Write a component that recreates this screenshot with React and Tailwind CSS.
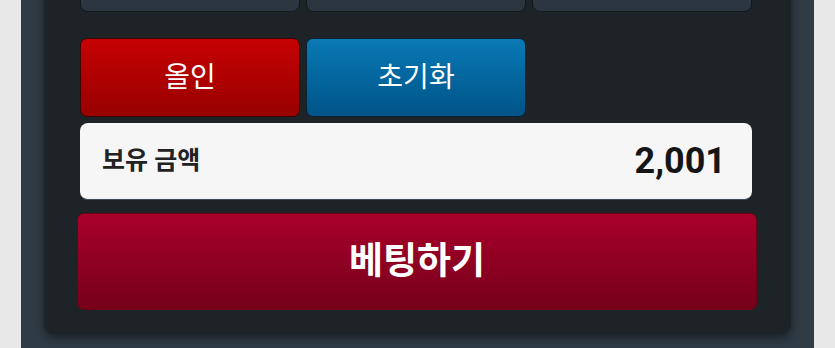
import React from 'react';

const FONT = { fontFamily: 'Roboto, "Noto Sans CJK KR", sans-serif' };

const App = () => {
    return (
        <div className="h-[348px] w-[835px] overflow-hidden bg-[#e8e8e8]" style={FONT}>
            <div className="ml-[21px] h-[400px] w-[793px] bg-[#2f3b45] px-[23px]">
                <div className="w-[747px] rounded-b-[10px] bg-[#1e2327] pb-[24px] pl-[36px] shadow-[0_4px_10px_rgba(0,0,0,0.45)]">
                    <div className="w-[672px]">
                        {/* previous row, mostly scrolled off the top */}
                        <div className="-mt-[48px] grid grid-cols-3 gap-[6px]">
                            <div className="h-[60px] rounded-[8px] border border-[#14181b] bg-[#2c3640]" />
                            <div className="h-[60px] rounded-[8px] border border-[#14181b] bg-[#2c3640]" />
                            <div className="h-[60px] rounded-[8px] border border-[#14181b] bg-[#2c3640]" />
                        </div>

                        <div className="mt-[26px] grid grid-cols-3 gap-[6px]">
                            <button className="flex h-[79px] items-center justify-center rounded-[7px] border border-[#3a0606] bg-gradient-to-b from-[#c60202] to-[#980000] text-[28px] text-white">
                                올인
                            </button>
                            <button className="flex h-[79px] items-center justify-center rounded-[7px] border border-[#0b2234] bg-gradient-to-b from-[#0a79b5] to-[#005487] text-[28px] text-white">
                                초기화
                            </button>
                            <div />
                        </div>

                        <div className="mt-[6px] flex h-[77px] items-center justify-between rounded-[8px] border-b border-[#3b4a58] bg-[#f6f6f7] pl-[22px] pr-[26px]">
                            <span className="text-[25px] font-bold text-[#222]">보유 금액</span>
                            <span className="text-[36px] font-bold text-[#151515]">2,001</span>
                        </div>

                        <button className="-ml-[3px] mt-[13px] flex h-[97px] w-[680px] items-center justify-center rounded-[7px] border border-[#6e0014] bg-gradient-to-b from-[#a9002a] to-[#76001a] text-[37px] font-bold text-white">
                            베팅하기
                        </button>
                    </div>
                </div>
            </div>
        </div>
    );
};

export default App;
